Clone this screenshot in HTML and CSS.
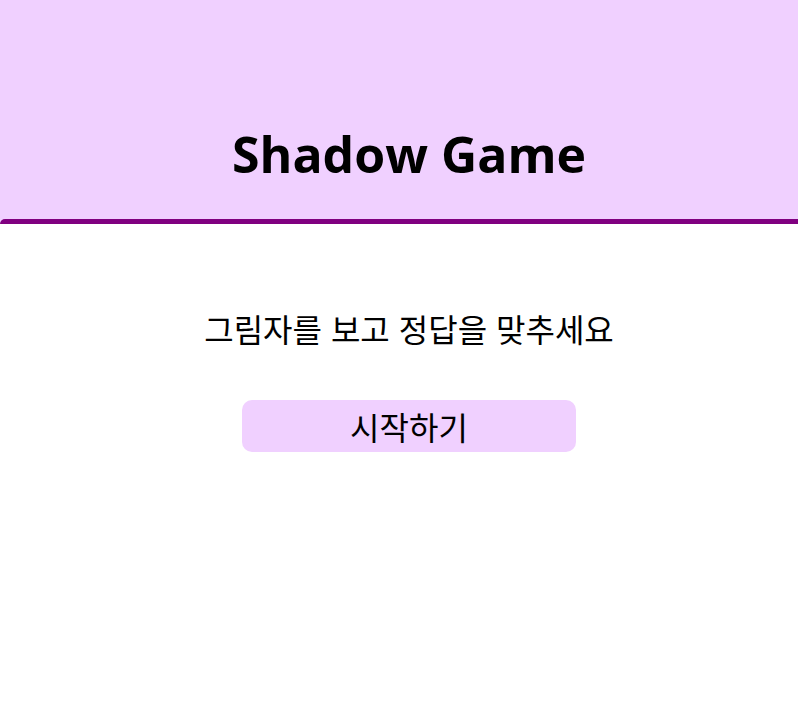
FILE: index.html
```html
<!DOCTYPE html>
<html lang="ko">
<head>
<meta charset="utf-8">
<title>Shadow Game</title>
<link rel="stylesheet" href="styles.css">
</head>
<body>
<header class="header">
  <h1 class="title">Shadow Game</h1>
</header>
<main class="main">
  <p class="desc">그림자를 보고 정답을 맞추세요</p>
  <button class="start">시작하기</button>
</main>
</body>
</html>
```
FILE: styles.css
```css
html, body {
  margin: 0;
  padding: 0;
  background: #f0d0ff;
}
body {
  font-family: "Noto Sans CJK KR", "Open Sans", sans-serif;
  color: #000;
  min-height: 725px;
  display: flex;
  flex-direction: column;
}
.header {
  height: 219px;
  background: #f0d0ff;
  display: flex;
  align-items: flex-end;
  justify-content: center;
  padding-left: 20px;
}
.title {
  margin: 0 0 32px 0;
  font-family: "Open Sans", sans-serif;
  font-weight: 700;
  font-size: 50px;
  line-height: 1.3;
}
.main {
  flex: 1;
  background: #ffffff;
  border-top: 5px solid #800080;
  border-top-left-radius: 5px;
  display: flex;
  flex-direction: column;
  align-items: center;
  padding-top: 82px;
  padding-left: 20px;
}
.desc {
  margin: 0;
  font-size: 32px;
  line-height: 44px;
  font-family: "Noto Sans CJK KR", sans-serif;
}
.start {
  margin-top: 50px;
  width: 334px;
  height: 52px;
  border: none;
  border-radius: 10px;
  background: #f0d0ff;
  font-family: "Noto Sans CJK KR", sans-serif;
  font-size: 32px;
  line-height: 52px;
  color: #000;
  padding: 0;
}
```
